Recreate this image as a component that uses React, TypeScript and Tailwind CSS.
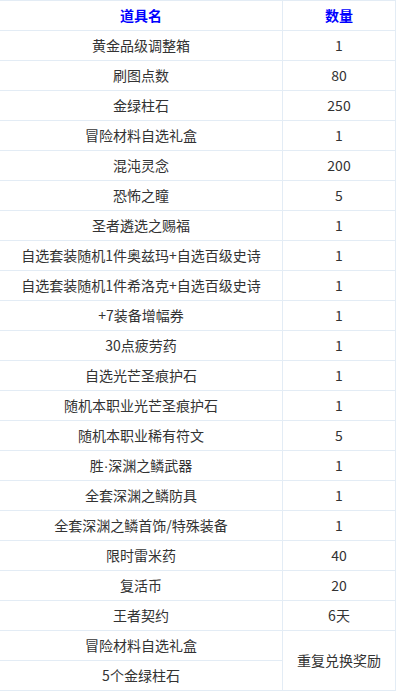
import React from "react";

const rows: [React.ReactNode, string][] = [
  ["黄金品级调整箱", "1"],
  ["刷图点数", "80"],
  ["金绿柱石", "250"],
  ["冒险材料自选礼盒", "1"],
  ["混沌灵念", "200"],
  ["恐怖之瞳", "5"],
  ["圣者遴选之赐福", "1"],
  ["自选套装随机1件奥兹玛+自选百级史诗", "1"],
  ["自选套装随机1件希洛克+自选百级史诗", "1"],
  ["+7装备增幅券", "1"],
  ["30点疲劳药", "1"],
  ["自选光芒圣痕护石", "1"],
  ["随机本职业光芒圣痕护石", "1"],
  ["随机本职业稀有符文", "5"],
  [
    <>
      胜<span style={{ fontFamily: '"Liberation Sans", sans-serif' }}>·</span>深渊之鳞武器
    </>,
    "1",
  ],
  ["全套深渊之鳞防具", "1"],
  ["全套深渊之鳞首饰/特殊装备", "1"],
  ["限时雷米药", "40"],
  ["复活币", "20"],
  ["王者契约", "6天"],
];

const td = "border border-[#e3ecf5] h-[30px] p-0 text-center align-middle";

export default function App() {
  return (
    <div className="w-[400px] h-[693px] bg-white overflow-hidden" style={{ fontFamily: '"Noto Sans CJK SC", "Microsoft YaHei", sans-serif' }}>
      <table className="-ml-px w-[397px] border-collapse text-[14px] text-[#333]">
        <colgroup>
          <col className="w-[283px]" />
          <col />
        </colgroup>
        <thead>
          <tr>
            <th className={`${td} font-bold text-[#0000ff]`}>道具名</th>
            <th className={`${td} font-bold text-[#0000ff]`}>数量</th>
          </tr>
        </thead>
        <tbody>
          {rows.map(([n, q], i) => (
            <tr key={i}>
              <td className={td}>{n}</td>
              <td className={td}>{q}</td>
            </tr>
          ))}
          <tr>
            <td className={td}>冒险材料自选礼盒</td>
            <td className={td} rowSpan={2}>重复兑换奖励</td>
          </tr>
          <tr>
            <td className={td}>5个金绿柱石</td>
          </tr>
        </tbody>
      </table>
    </div>
  );
}
